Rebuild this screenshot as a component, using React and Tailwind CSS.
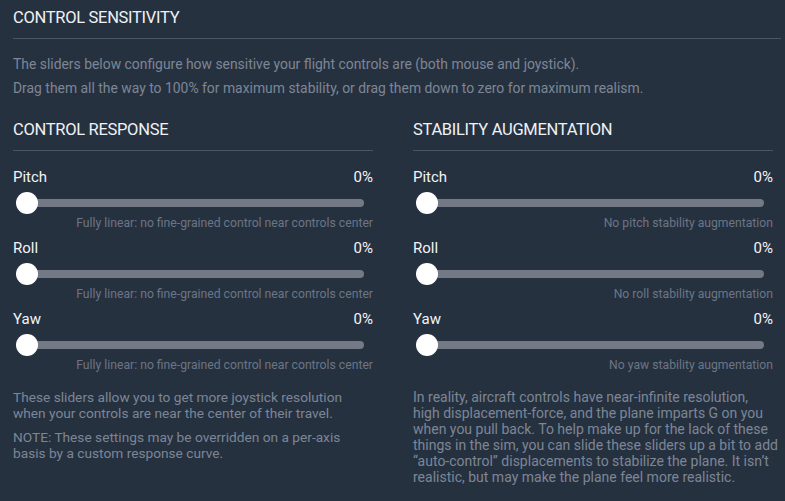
import React from 'react';

const responseAxes = [
  { name: "Pitch", hint: "Fully linear: no fine-grained control near controls center" },
  { name: "Roll", hint: "Fully linear: no fine-grained control near controls center" },
  { name: "Yaw", hint: "Fully linear: no fine-grained control near controls center" },
];

const stabilityAxes = [
  { name: "Pitch", hint: "No pitch stability augmentation" },
  { name: "Roll", hint: "No roll stability augmentation" },
  { name: "Yaw", hint: "No yaw stability augmentation" },
];

const realismLines = [
  "In reality, aircraft controls have near-infinite resolution,",
  "high displacement-force, and the plane imparts G on you",
  "when you pull back. To help make up for the lack of these",
  "things in the sim, you can slide these sliders up a bit to add",
  "“auto-control” displacements to stabilize the plane. It isn’t",
  "realistic, but may make the plane feel more realistic.",
];

function SliderRow({ axis }) {
  return (
    <div className="flex flex-col">
      <div className="flex justify-between h-[18px] text-[15px] leading-[18px] text-[#f3f4f6]">
        <span>{axis.name}</span>
        <span>0%</span>
      </div>
      {/* slider track + thumb */}
      <div className="relative h-[22px] mt-[6px] flex items-center pl-[4px] pr-[9px]">
        <div className="h-[8px] w-full rounded-full bg-[#737a85]" />
        <div className="absolute left-[3px] top-0 w-[22px] h-[22px] rounded-full bg-white" />
      </div>
      <div className="mt-[1px] text-right text-[12.2px] leading-[16px] h-[16px] text-[#6c7584]">{axis.hint}</div>
    </div>
  );
}

function Column({ title, axes, children }) {
  return (
    <div className="flex flex-col w-[360px]">
      <div className="text-[16.5px] leading-[20px] tracking-[-0.3px] text-[#eef1f5] pb-[10px] border-b border-[#4a5464]">
        {title}
      </div>
      <div className="flex flex-col mt-[17px] gap-[8px]">
        {axes.map((a) => (
          <SliderRow key={a.name} axis={a} />
        ))}
      </div>
      <div className="mt-[16px] text-[13.7px] leading-[16px] text-[#7d8696]">{children}</div>
    </div>
  );
}

export default function App() {
  return (
    <div
      className="w-[785px] h-[501px] overflow-hidden bg-[#263140] pl-[13px] pr-[4px] pt-[8px]"
      style={{ fontFamily: "Roboto, 'Noto Sans', sans-serif" }}
    >
      <div className="text-[16.5px] leading-[20px] tracking-[-0.3px] text-[#eef1f5] pb-[10px] border-b border-[#4a5464]">
        CONTROL SENSITIVITY
      </div>
      <div className="mt-[13px] text-[13.9px] leading-[24px] text-[#7d8696]">
        <p>The sliders below configure how sensitive your flight controls are (both mouse and joystick).</p>
        <p>Drag them all the way to 100% for maximum stability, or drag them down to zero for maximum realism.</p>
      </div>
      <div className="flex gap-[40px] mt-[20px]">
        <Column title="CONTROL RESPONSE" axes={responseAxes}>
          <p>These sliders allow you to get more joystick resolution when your controls are near the center of their travel.</p>
          <p className="mt-[8px]">NOTE: These settings may be overridden on a per-axis basis by a custom response curve.</p>
        </Column>
        <Column title="STABILITY AUGMENTATION" axes={stabilityAxes}>
          <p className="text-[14px] whitespace-nowrap">
            {realismLines.map((line) => (
              <span key={line} className="block">{line}</span>
            ))}
          </p>
        </Column>
      </div>
    </div>
  );
}
